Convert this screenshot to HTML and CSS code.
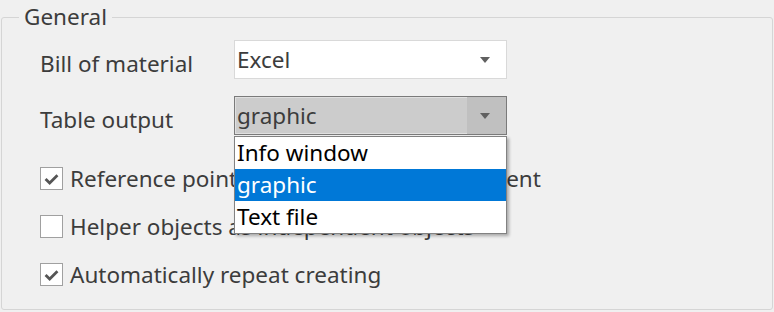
FILE: index.html
```html
<!DOCTYPE html>
<html lang="en">
<head>
  <meta charset="UTF-8">
  <title>General</title>
  <link rel="stylesheet" href="styles.css">
</head>
<body>
  <fieldset class="group">
    <legend>General</legend>

    <div class="content">
      <div class="form">
        <label class="label">Bill of material</label>
        <div class="combo">
          <span class="combo-text">Excel</span>
          <span class="combo-arrow"></span>
        </div>

        <label class="label">Table output</label>
        <div class="combo-wrap">
          <div class="combo open">
            <span class="combo-text">graphic</span>
            <span class="combo-arrow"></span>
          </div>
          <!-- aufgeklappte Liste -->
          <ul class="dropdown">
            <li>Info window</li>
            <li class="selected">graphic</li>
            <li>Text file</li>
          </ul>
        </div>
      </div>

      <div class="checks">
        <label class="check">
          <span class="box"><svg viewBox="0 0 23 23"><polyline points="5,12 9.5,16.5 18,8"/></svg></span>
          Reference point as the independent element
        </label>
        <label class="check">
          <span class="box"></span>
          Helper objects as independent objects
        </label>
        <label class="check">
          <span class="box"><svg viewBox="0 0 23 23"><polyline points="5,12 9.5,16.5 18,8"/></svg></span>
          Automatically repeat creating
        </label>
      </div>
    </div>
  </fieldset>
</body>
</html>
```

FILE: styles.css
```css
body {
  margin: 0;
  background: #f0f0f0;
  font-family: "Noto Sans", "Open Sans", sans-serif;
  font-size: 22.5px;
  color: #3c3c3c;
  width: 774px;
  height: 312px;
  overflow: hidden;
}
.group {
  margin: 6px 1px 0 1px;
  height: 304px;
  box-sizing: border-box;
  border: 1px solid #d5d5d5;
  border-radius: 3px;
  padding: 0;
}
.group legend {
  margin-left: 17px;
  padding: 0 5px;
  line-height: 22px;
}
.content {
  padding: 12px 0 0 38px;
}
.form {
  display: grid;
  grid-template-columns: 194px 273px;
  grid-auto-rows: 39px;
  row-gap: 17px;
}
.label {
  padding-top: 8px;
  line-height: 31px;
}
.combo {
  height: 39px;
  box-sizing: border-box;
  background: #fff;
  border: 1px solid #d9d9d9;
  display: flex;
  align-items: center;
  padding-left: 2px;
}
.combo-text {
  flex: 1;
}
.combo-arrow {
  width: 39px;
  align-self: stretch;
  position: relative;
}
.combo-arrow::after {
  content: "";
  position: absolute;
  left: 13px;
  top: 16px;
  border-left: 5px solid transparent;
  border-right: 5px solid transparent;
  border-top: 6px solid #606060;
}
.combo.open {
  background: #cccccc;
  border-color: #7a7a7a;
  box-shadow: inset 0 0 0 1px #e0e0e0;
}
.combo.open .combo-arrow {
  background: #c0c0c0;
}
.combo-wrap {
  position: relative;
}
.dropdown {
  position: absolute;
  top: 100%;
  left: 0;
  width: 273px;
  box-sizing: border-box;
  margin: 1px 0 0 0;
  padding: 0;
  list-style: none;
  background: #fff;
  border: 1px solid #828282;
  box-shadow: 2px 2px 3px rgba(0, 0, 0, 0.3);
  color: #000;
  z-index: 10;
}
.dropdown li {
  height: 32px;
  line-height: 32px;
  padding-left: 2px;
}
.dropdown li.selected {
  background: #0078d7;
  color: #fff;
}
.checks {
  margin-top: 31px;
  display: flex;
  flex-direction: column;
  gap: 24px;
}
.check {
  display: flex;
  align-items: center;
  height: 24px;
  gap: 7px;
}
.box {
  width: 23px;
  height: 23px;
  box-sizing: border-box;
  border: 1px solid #a0a0a0;
  background: #fff;
}
.box svg {
  display: block;
  width: 21px;
  height: 21px;
  fill: none;
  stroke: #555;
  stroke-width: 3;
}
```
